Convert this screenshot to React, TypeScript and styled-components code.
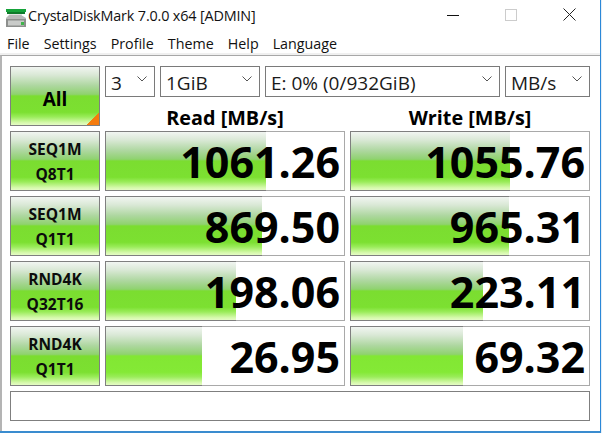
import React from "react";
import styled, { createGlobalStyle } from "styled-components";

const Global = createGlobalStyle`
  html, body { margin: 0; padding: 0; background: #fff; }
  body { font-family: "Open Sans", "Noto Sans", sans-serif; color: #000; }
  * { box-sizing: border-box; }
`;

const Page = styled.div`
  width: 602px;
  height: 433px;
  background: #e8eef4;
  overflow: hidden;
`;

const Window = styled.div`
  width: 601px;
  height: 433px;
  background: #fff;
  border-right: 1px solid #2b88d8;
  border-bottom: 2px solid #3a8ccf;
  display: flex;
  flex-direction: column;
`;

const TitleBar = styled.div`
  height: 30px;
  display: flex;
  align-items: center;
  padding-left: 3px;
  flex: none;
`;

const Title = styled.span`
  font-size: 14.4px;
  letter-spacing: -0.16px;
  margin-left: 2px;
  color: #111;
  white-space: nowrap;
  flex: 1;
`;

const WinControls = styled.div`
  display: flex;
  align-items: center;
  width: 153px;
  justify-content: space-between;
  padding-right: 24px;
  margin-top: -1px;
`;

const MenuBar = styled.div`
  height: 25px;
  display: flex;
  align-items: center;
  gap: 14px;
  padding: 5px 0 0 7px;
  font-size: 14.3px;
  line-height: 18px;
  color: #111;
  background: #fff;
  border-bottom: 2px solid #f0f0f0;
  flex: none;
`;

const Frame = styled.div`
  flex: 1;
  border-top: 1px solid #a8a8a8;
  border-left: 2px solid #b4b4b4;
  padding: 10px 9px 0 8px;
  display: flex;
  flex-direction: column;
  gap: 5px;
`;

const Top = styled.div`
  display: grid;
  grid-template-columns: 90px 1fr;
  gap: 5px;
  height: 60px;
`;

const barGradient = `linear-gradient(180deg,
  #f1f5f1 0%, #d9e8d5 14%, #aed7a0 32%, #8fd26f 47%, #7bdd30 50%, #7ce031 78%, #9aec5a 86%, #d6f9ac 96%, #e4fcc4 100%)`;

const TestButton = styled.div<{ $corner?: boolean }>`
  border: 1px solid #7f7f7f;
  background: ${(p) =>
      p.$corner
        ? "linear-gradient(135deg, transparent 50%, #f57c0e 50%) right bottom / 12px 12px no-repeat, "
        : ""}
    ${barGradient};
  display: flex;
  flex-direction: column;
  align-items: center;
  justify-content: center;
  font-weight: 700;
  padding-top: ${(p) => (p.$corner ? 6 : 1)}px;
`;

const AllLabel = styled.span`
  font-size: 19px;
  line-height: 1;
`;

const RowLabel = styled.span`
  font-size: 15.5px;
  line-height: 25px;
  color: #0c0c0c;
`;

const Controls = styled.div`
  display: flex;
  flex-direction: column;
`;

const Selects = styled.div`
  display: flex;
  gap: 5px;
  height: 31px;
`;

const Select = styled.div<{ $w: number }>`
  width: ${(p) => p.$w}px;
  border: 1px solid #7a7a7a;
  display: flex;
  align-items: center;
  justify-content: space-between;
  padding: 2px 7px 0 5px;
  font-size: 19px;
  line-height: 24px;
  color: #1a1a1a;
  white-space: nowrap;
`;

const Chevron = styled.svg`
  width: 10px;
  height: 6px;
  margin-top: -7px;
  flex: none;
`;

const Headers = styled.div`
  display: grid;
  grid-template-columns: 240px 240px;
  gap: 5px;
  flex: 1;
`;

const Header = styled.div`
  font-size: 19.8px;
  font-weight: 700;
  text-align: center;
  line-height: 17px;
  padding-top: 12px;
  white-space: nowrap;
`;

const Row = styled.div`
  display: grid;
  grid-template-columns: 90px 240px 240px;
  gap: 5px;
  height: 60px;
`;

const Cell = styled.div`
  display: grid;
  box-shadow: inset 0 0 0 1px #a9a9a9;
  overflow: hidden;
`;

const Bar = styled.div<{ $w: number; $bright?: boolean }>`
  grid-area: 1 / 1;
  width: ${(p) => p.$w}px;
  border: 1px solid #7f7f7f;
  border-right: none;
  background: ${(p) =>
    p.$bright
      ? barGradient.replace(/#7bdd30/, "#82e733").replace(/#7ce031/, "#84e936")
      : barGradient};
`;

const Value = styled.div`
  grid-area: 1 / 1;
  justify-self: end;
  align-self: center;
  font-size: 43px;
  font-weight: 700;
  line-height: 1;
  padding-right: 5px;
  margin-top: 1px;
`;

const Message = styled.div`
  height: 30px;
  border: 1px solid #7f7f7f;
  width: 580px;
`;

const Icon = () => (
  <svg width="23" height="23" viewBox="0 0 23 23">
    <rect x="3" y="5" width="20" height="3" fill="#16a33a" />
    <rect x="4" y="8" width="18" height="2" fill="#0f7a2a" />
    <rect x="6" y="10" width="13" height="2" fill="#e2e2e2" />
    <path d="M6 12h12l5 3v9H3v-9z" transform="translate(0 -1)" fill="#b9b9b9" />
    <rect x="3" y="15" width="20" height="8" fill="#8d8f8d" />
    <rect x="5" y="16.5" width="16" height="5" fill="#c9cbc9" />
    <rect x="18" y="18" width="3" height="3" fill="#3fb44a" />
  </svg>
);

const Down = () => (
  <Chevron viewBox="0 0 10 6">
    <path d="M.5.5 5 5 9.5.5" fill="none" stroke="#555" strokeWidth="1" />
  </Chevron>
);

const rows = [
  { a: "SEQ1M", b: "Q8T1", r: "1061.26", rw: 161, w: "1055.76", ww: 160 },
  { a: "SEQ1M", b: "Q1T1", r: "869.50", rw: 157, w: "965.31", ww: 159 },
  { a: "RND4K", b: "Q32T16", r: "198.06", rw: 131, w: "223.11", ww: 133 },
  { a: "RND4K", b: "Q1T1", r: "26.95", rw: 97, w: "69.32", ww: 113, bright: true },
];

export default function App() {
  return (
    <Page>
      <Global />
      <Window>
        <TitleBar>
          <Icon />
          <Title>CrystalDiskMark 7.0.0 x64 [ADMIN]</Title>
          <WinControls>
            <svg width="12" height="12" viewBox="0 0 12 12">
              <path d="M0 6.5h12" stroke="#111" strokeWidth="1" />
            </svg>
            <svg width="12" height="12" viewBox="0 0 12 12">
              <rect x=".5" y=".5" width="11" height="11" fill="none" stroke="#ccc" />
            </svg>
            <svg width="13" height="13" viewBox="0 0 13 13">
              <path d="M.5.5l12 12M12.5.5l-12 12" stroke="#222" strokeWidth="1" />
            </svg>
          </WinControls>
        </TitleBar>
        <MenuBar>
          <span>File</span>
          <span>Settings</span>
          <span>Profile</span>
          <span>Theme</span>
          <span>Help</span>
          <span>Language</span>
        </MenuBar>
        <Frame>
          <Top>
            <TestButton $corner>
              <AllLabel>All</AllLabel>
            </TestButton>
            <Controls>
              <Selects>
                <Select $w={50}>3<Down /></Select>
                <Select $w={100}>1GiB<Down /></Select>
                <Select $w={235}>E: 0% (0/932GiB)<Down /></Select>
                <Select $w={85}>MB/s<Down /></Select>
              </Selects>
              <Headers>
                <Header>Read [MB/s]</Header>
                <Header>Write [MB/s]</Header>
              </Headers>
            </Controls>
          </Top>
          {rows.map((r) => (
            <Row key={r.b + r.r}>
              <TestButton>
                <RowLabel>{r.a}</RowLabel>
                <RowLabel>{r.b}</RowLabel>
              </TestButton>
              <Cell>
                <Bar $w={r.rw} $bright={r.bright} />
                <Value>{r.r}</Value>
              </Cell>
              <Cell>
                <Bar $w={r.ww} $bright={r.bright} />
                <Value>{r.w}</Value>
              </Cell>
            </Row>
          ))}
          <Message />
        </Frame>
      </Window>
    </Page>
  );
}
